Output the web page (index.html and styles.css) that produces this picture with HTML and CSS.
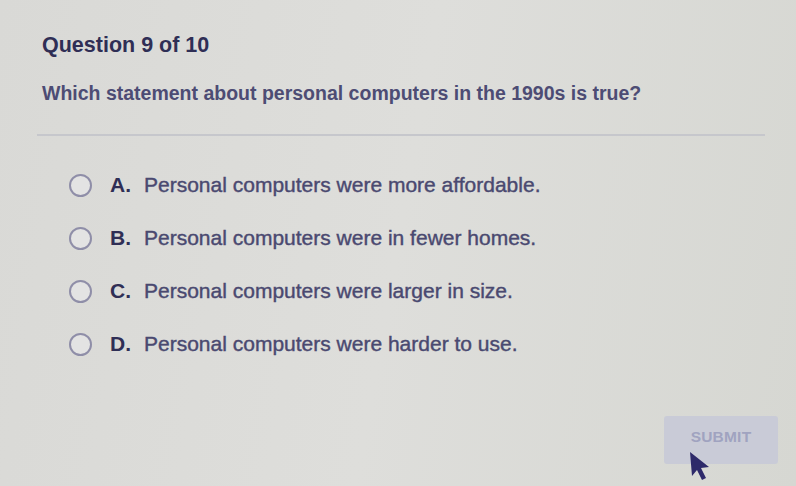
FILE: index.html
```html
<!DOCTYPE html>
<html>
<head>
<meta charset="utf-8">
<link rel="stylesheet" href="styles.css">
</head>
<body>
<div class="page">
  <h1 class="qnum">Question 9 of 10</h1>
  <p class="prompt">Which statement about personal computers in the 1990s is true?</p>
  <hr class="divider">
  <ul class="options">
    <li class="option"><span class="radio"></span><span class="letter">A.</span><span class="text">Personal computers were more affordable.</span></li>
    <li class="option"><span class="radio"></span><span class="letter">B.</span><span class="text">Personal computers were in fewer homes.</span></li>
    <li class="option"><span class="radio"></span><span class="letter">C.</span><span class="text">Personal computers were larger in size.</span></li>
    <li class="option"><span class="radio"></span><span class="letter">D.</span><span class="text">Personal computers were harder to use.</span></li>
  </ul>
  <div class="footer">
    <button class="submit">SUBMIT</button>
    <svg class="cursor" width="26" height="32" viewBox="0 0 26 32"><path d="M2 2 L4 26 L9 20 L14 30 L18 28 L13 18 L21 17 Z" fill="#2e2a6a"/></svg>
  </div>
</div>
</body>
</html>
```
FILE: styles.css
```css
html, body {
  margin: 0;
  padding: 0;
}
body {
  width: 796px;
  height: 486px;
  overflow: hidden;
  background: linear-gradient(100deg, #d9d9d6 0%, #dededb 50%, #d6d7d2 100%);
  font-family: "Liberation Sans", Arial, sans-serif;
  color: #3e3d5e;
}
.page {
  position: relative;
  height: 486px;
  padding: 0 31px 0 42px;
  box-sizing: border-box;
}
.qnum {
  margin: 0;
  padding-top: 34px;
  font-size: 21.5px;
  font-weight: 700;
  line-height: 22px;
  color: #2f2e55;
}
.prompt {
  margin: 0;
  padding-top: 26px;
  font-size: 19.5px;
  font-weight: 700;
  line-height: 22px;
  color: #4d4c74;
}
.divider {
  margin: 30px 0 0 -5px;
  border: 0;
  border-top: 2px solid #c6c7cc;
  height: 0;
}
.options {
  list-style: none;
  margin: 0;
  padding: 38px 0 0 27px;
  display: flex;
  flex-direction: column;
  gap: 31px;
}
.option {
  display: flex;
  align-items: center;
  height: 22px;
  font-size: 21px;
  line-height: 22px;
}
.radio {
  width: 19px;
  height: 19px;
  border: 2.5px solid #8f8ea8;
  border-radius: 50%;
  background: #e3e3e3;
  flex: none;
}
.letter {
  margin-left: 18px;
  width: 34px;
  font-weight: 700;
  color: #2f2e55;
}
.text {
  color: #4a4970;
  -webkit-text-stroke: 0.4px #4a4970;
}
.footer {
  position: absolute;
  right: 18px;
  bottom: 22px;
}
.submit {
  width: 114px;
  height: 48px;
  border: 0;
  border-radius: 3px;
  background: #c9cbd7;
  color: #a0a3c0;
  font-family: "Liberation Sans", Arial, sans-serif;
  font-size: 15.5px;
  font-weight: 700;
  letter-spacing: 0.2px;
  padding-bottom: 8px;
}
.cursor {
  position: absolute;
  left: 24px;
  top: 34px;
}
```
